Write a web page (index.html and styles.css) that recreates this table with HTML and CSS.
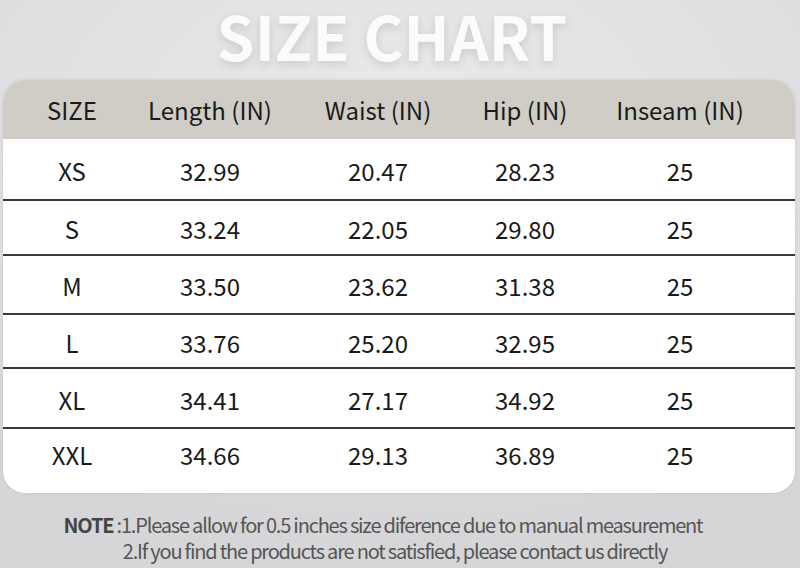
FILE: index.html
```html
<!DOCTYPE html>
<html lang="en">
<head>
<meta charset="utf-8">
<title>Size Chart</title>
<link rel="stylesheet" href="styles.css">
</head>
<body>
<main class="page">
  <h1 class="title">SIZE CHART</h1>
  <section class="card">
    <div class="row head">
      <span>SIZE</span><span>Length (IN)</span><span>Waist (IN)</span><span>Hip (IN)</span><span>Inseam (IN)</span>
    </div>
    <div class="row r1"><span>XS</span><span>32.99</span><span>20.47</span><span>28.23</span><span>25</span></div>
    <div class="row r2"><span>S</span><span>33.24</span><span>22.05</span><span>29.80</span><span>25</span></div>
    <div class="row r3"><span>M</span><span>33.50</span><span>23.62</span><span>31.38</span><span>25</span></div>
    <div class="row r4"><span>L</span><span>33.76</span><span>25.20</span><span>32.95</span><span>25</span></div>
    <div class="row r5"><span>XL</span><span>34.41</span><span>27.17</span><span>34.92</span><span>25</span></div>
    <div class="row last"><span>XXL</span><span>34.66</span><span>29.13</span><span>36.89</span><span>25</span></div>
  </section>
  <p class="note"><span class="note-line"><b>NOTE</b> :1.Please allow for 0.5 inches size diference due to manual measurement</span><span class="note-line second">2.If you find the products are not satisfied, please contact us directly</span></p>
</main>
</body>
</html>
```
FILE: styles.css
```css
html, body {
  margin: 0;
  padding: 0;
}
body {
  width: 800px;
  height: 568px;
  overflow: hidden;
  font-family: "Noto Sans CJK SC", "Open Sans", sans-serif;
  background: radial-gradient(ellipse 700px 420px at 50% 20%, #e9e9eb 0%, #dfdfe1 60%, #d6d6d8 100%);
  color: #1a1a1a;
}
.page {
  display: flex;
  flex-direction: column;
  height: 568px;
}
.title {
  margin: 0;
  height: 80px;
  box-sizing: border-box;
  padding: 0 16px 12px 0;
  display: flex;
  align-items: center;
  justify-content: center;
  font-size: 61px;
  font-weight: 700;
  color: #fbfbfb;
  text-shadow: 0 3px 8px rgba(0, 0, 0, 0.12);
  line-height: 1;
}
.card {
  margin: 0 5px 0 3px;
  background: #fff;
  border-radius: 22px;
  overflow: hidden;
  box-shadow: 0 0 3px rgba(0, 0, 0, 0.12);
}
.row {
  display: grid;
  grid-template-columns: 138px 138px 198px 96px 214px 1fr;
  align-items: center;
  border-bottom: 2px solid #3a3a3a;
  font-size: 24px;
  padding-top: 2px;
  box-sizing: content-box;
}
.row span {
  text-align: center;
  white-space: nowrap;
}
.row.head {
  background: #d0cdc6;
  border-bottom: none;
  height: 59px;
  padding-top: 0;
}
.r1 { height: 58px; }
.r2 { height: 51px; }
.r3 { height: 55px; }
.r4 { height: 50px; }
.r5 { height: 56px; }
.row.last {
  border-bottom: none;
  height: 46px;
  padding-bottom: 16px;
}
.note {
  margin: 19px 0 0;
  display: flex;
  flex-direction: column;
  align-items: center;
  font-size: 20px;
  line-height: 26px;
  color: #555;
  padding-right: 34px;
}
.note-line {
  white-space: nowrap;
  letter-spacing: -1.2px;
}
.note-line.second {
  margin-left: 24px;
}
.note b {
  color: #444;
}
```
